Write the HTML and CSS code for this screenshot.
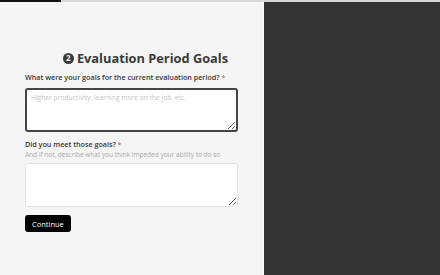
FILE: index.html
```html
<!DOCTYPE html>
<html>
<head>
<meta charset="utf-8">
<link rel="stylesheet" href="styles.css">
</head>
<body>
<div class="page">
  <div class="progress"><div class="progress-fill"></div></div>
  <div class="main">
    <div class="form-panel">
      <h1 class="title"><span class="step">2</span>Evaluation Period Goals</h1>
      <div class="field">
        <label class="label">What were your goals for the current evaluation period? <span class="req">*</span></label>
        <textarea class="input focused" placeholder="Higher productivity, learning more on the job, etc."></textarea>
      </div>
      <div class="field second">
        <label class="label">Did you meet those goals? <span class="req">*</span></label>
        <div class="hint">And if not, describe what you think impeded your ability to do so</div>
        <textarea class="input"></textarea>
      </div>
      <button class="btn">Continue</button>
    </div>
    <div class="side-panel"></div>
  </div>
</div>
</body>
</html>
```

FILE: styles.css
```css
html, body {
  margin: 0;
  padding: 0;
  height: 100%;
}
body {
  font-family: "Open Sans", "Liberation Sans", sans-serif;
  background: #f5f5f5;
}
.page {
  display: flex;
  flex-direction: column;
  height: 275px;
}
.progress {
  height: 2px;
  background: #d9d9d9;
  display: flex;
}
.progress-fill {
  width: 61px;
  background: #111;
}
.main {
  flex: 1;
  display: flex;
}
.form-panel {
  width: 264px;
  box-sizing: border-box;
  padding: 47px 25px 0 25px;
  background: #f5f5f5;
  border-right: 1px solid #fafafa;
}
.side-panel {
  flex: 1;
  background: #333333;
}
.title {
  margin: 0 0 5px 0;
  padding-left: 28px;
  font-size: 12.8px;
  font-weight: 700;
  color: #3a3a3a;
  text-align: center;
  display: flex;
  align-items: center;
  justify-content: center;
  gap: 3px;
  line-height: 18px;
}
.step {
  display: inline-flex;
  width: 11px;
  height: 11px;
  border-radius: 50%;
  background: #3a3a3a;
  color: #f5f5f5;
  font-size: 8px;
  align-items: center;
  justify-content: center;
  line-height: 1;
}
.field {
  display: flex;
  flex-direction: column;
}
.field.second {
  margin-top: 7px;
}
.label {
  font-size: 7.2px;
  font-weight: 600;
  color: #383838;
  line-height: 11px;
}
.req {
  color: #e06b6b;
}
.hint {
  font-size: 6.5px;
  color: #aaa;
  line-height: 10px;
}
.input {
  margin-top: 5px;
  height: 44px;
  box-sizing: border-box;
  border: 1px solid #e3e3e3;
  border-radius: 3px;
  background: #fff;
  font-family: inherit;
  font-size: 6.7px;
  padding: 4px 5px;
  resize: vertical;
  outline: none;
}
.field.second .input {
  margin-top: 3px;
}
.input.focused {
  border: 2px solid #444;
  padding: 3px 4px;
}
.input::placeholder {
  color: #c4c4c4;
}
.btn {
  margin-top: 8px;
  background: #000;
  color: #fff;
  border: none;
  border-radius: 3px;
  font-family: inherit;
  font-size: 7.5px;
  height: 17px;
  padding: 0 7px;
  cursor: pointer;
}
```
